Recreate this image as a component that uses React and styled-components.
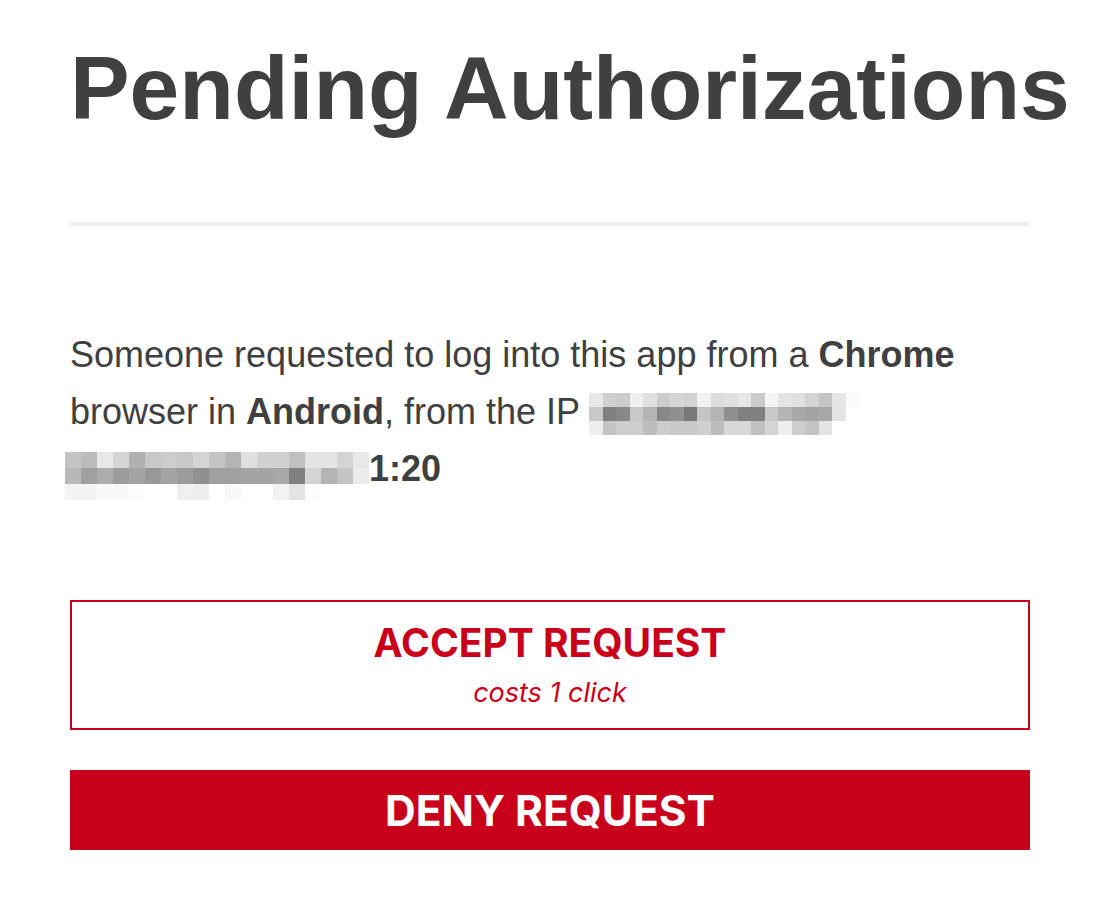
import React from "react";
import styled, { createGlobalStyle } from "styled-components";

const Global = createGlobalStyle`
  html, body { margin: 0; padding: 0; background: #fff; }
  body { font-family: "Liberation Sans", Arial, Helvetica, sans-serif; color: #404040; }
`;

const Page = styled.main`
  width: 960px;
  padding: 44px 0 40px 70px;
`;

const Title = styled.h1`
  margin: 0;
  font-family: "Liberation Sans", Arial, sans-serif;
  font-weight: 700;
  font-size: 89.4px;
  line-height: 89px;
  color: #404040;
  letter-spacing: 0;
  white-space: nowrap;
`;

const Divider = styled.hr`
  margin: 89px 0 0;
  border: 0;
  height: 4px;
  background: #eeeeee;
`;

const Message = styled.p`
  margin: 100px 0 0;
  font-size: 36px;
  line-height: 57px;
  color: #404040;
`;

const Strong = styled.b`
  font-weight: 700;
`;

const Pixels = styled.span`
  display: inline-grid;
  grid-template-columns: repeat(${(p) => p.$cols}, ${(p) => p.$cell}px);
  grid-auto-rows: ${(p) => p.$row}px;
  vertical-align: ${(p) => p.$lift}px;
  margin-left: ${(p) => p.$shift || 0}px;
`;

const Cell = styled.span`
  display: block;
`;

const Actions = styled.div`
  margin-top: 100px;
  display: flex;
  flex-direction: column;
  gap: 40px;
`;

const OutlineButton = styled.button`
  box-sizing: border-box;
  height: 130px;
  border: 2px solid #c9001b;
  background: #fff;
  color: #c9001b;
  font-family: Inter, "Liberation Sans", sans-serif;
  display: flex;
  flex-direction: column;
  align-items: center;
  justify-content: center;
  gap: 10px;
  padding: 0;
  cursor: pointer;
`;

const SolidButton = styled.button`
  box-sizing: border-box;
  height: 80px;
  border: 0;
  background: #c9001b;
  color: #fff;
  font-family: Inter, "Liberation Sans", sans-serif;
  display: flex;
  align-items: center;
  justify-content: center;
  padding: 0;
  cursor: pointer;
`;

const ButtonLabel = styled.span`
  font-size: ${(p) => p.$size}px;
  font-weight: 700;
  line-height: 1.2;
  letter-spacing: 0;
`;

const ButtonNote = styled.span`
  font-size: 27px;
  font-style: italic;
  font-weight: 400;
  line-height: 1.2;
`;

const g = (h) => `#${h}${h}${h}`;

const ip1 = [
  ["e8","d0","cc","f0","e0","cc","d6","d2","f2","dc","e0","e8","cc","f4","e4","e0","d4","c4","e6","fa"],
  ["c8","80","88","c8","b4","88","90","78","c4","b4","90","80","80","c8","b4","a8","a4","a8","e4","ff"],
  ["ee","c4","cc","cc","bc","cc","c8","c8","d0","bc","d8","d8","c0","d4","ee","cc","c4","e4","ff","ff"],
];

const ip2 = [
  ["c4","bc","e8","d4","b0","c8","cc","c8","d4","c4","b4","e0","d0","d0","c0","e4","e4","d4","e8"],
  ["b8","a0","ac","9c","a4","98","a4","9c","90","a0","a0","a4","a4","a8","80","d4","b4","c4","ec"],
  ["f4","f4","f8","f8","fc","ff","ff","f0","ee","ff","f8","ff","ff","f2","e4","fc","ff","ff","ff"],
];

function Blur({ rows, cell, row, lift, shift }) {
  return (
    <Pixels $cols={rows[0].length} $cell={cell} $row={row} $lift={lift} $shift={shift} aria-hidden="true">
      {rows.flat().map((c, i) => (
        <Cell key={i} style={{ background: g(c) }} />
      ))}
    </Pixels>
  );
}

export default function App() {
  return (
    <>
      <Global />
      <Page>
        <Title>Pending Authorizations</Title>
        <Divider />
        <Message>
          Someone requested to log into this app from a <Strong>Chrome</Strong>{" "}
          browser in <Strong>Android</Strong>, from the IP{" "}
          <Blur rows={ip1} cell={13.5} row={14} lift={17} />{" "}
          <Blur rows={ip2} cell={16} row={16} lift={13} shift={-5} />
          <Strong>1:20</Strong>
        </Message>
        <Actions>
          <OutlineButton>
            <ButtonLabel $size={39}>ACCEPT REQUEST</ButtonLabel>
            <ButtonNote>costs 1 click</ButtonNote>
          </OutlineButton>
          <SolidButton>
            <ButtonLabel $size={42.5}>DENY REQUEST</ButtonLabel>
          </SolidButton>
        </Actions>
      </Page>
    </>
  );
}
